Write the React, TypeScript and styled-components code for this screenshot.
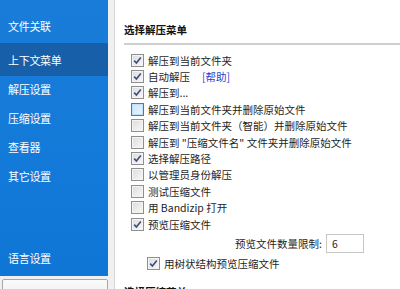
import styled, { createGlobalStyle } from 'styled-components';

const GlobalStyle = createGlobalStyle`
  html, body {
    margin: 0;
    padding: 0;
    background: #f0f0f0;
  }
  body {
    font-family: "Noto Sans CJK SC", "Noto Sans", sans-serif;
    font-size: 10.5px;
    color: #1e1e1e;
  }
`;

const navItems = ['文件关联', '上下文菜单', '解压设置', '压缩设置', '查看器', '其它设置'];

type Row = { label: string; checked?: boolean; hover?: boolean; help?: boolean };

const rows: Row[] = [
  { label: '解压到当前文件夹', checked: true },
  { label: '自动解压', checked: true, help: true },
  { label: '解压到...', checked: true },
  { label: '解压到当前文件夹并删除原始文件', hover: true },
  { label: '解压到当前文件夹（智能）并删除原始文件' },
  { label: '解压到 "压缩文件名" 文件夹并删除原始文件' },
  { label: '选择解压路径', checked: true },
  { label: '以管理员身份解压' },
  { label: '测试压缩文件' },
  { label: '用 Bandizip 打开' },
  { label: '预览压缩文件', checked: true },
];

function CheckBox({ checked, hover }: { checked?: boolean; hover?: boolean }) {
  return (
    <Box $hover={hover}>
      {checked && (
        <svg width="9" height="9" viewBox="0 0 9 9">
          <path d="M1.2 4.6 L3.4 7 L7.8 1.4" fill="none" stroke="#3d4f7c" strokeWidth="1.6" />
        </svg>
      )}
    </Box>
  );
}

export default function App() {
  return (
    <>
      <GlobalStyle />
      <Window>
        <LeftColumn>
          <Sidebar>
            {navItems.map((item, i) => (
              <NavItem key={item} $active={i === 1}>{item}</NavItem>
            ))}
            <NavItem $bottom>语言设置</NavItem>
          </Sidebar>
          <LowerButton />
        </LeftColumn>
        <Content>
          <SectionTitle>选择解压菜单</SectionTitle>
          <Divider />
          <List>
            {rows.map((r) => (
              <CheckRow key={r.label}>
                <CheckBox checked={r.checked} hover={r.hover} />
                <span>{r.label}</span>
                {r.help && <HelpLink>[帮助]</HelpLink>}
              </CheckRow>
            ))}
          </List>
          <LimitRow>
            <span>预览文件数量限制:</span>
            <NumberInput value="6" readOnly />
          </LimitRow>
          <CheckRow $indent>
            <CheckBox checked />
            <span>用树状结构预览压缩文件</span>
          </CheckRow>
          <SectionTitle $next>选择压缩菜单</SectionTitle>
        </Content>
      </Window>
    </>
  );
}

const Window = styled.div`
  display: flex;
  width: 400px;
  height: 289px;
  overflow: hidden;
  background: #f0f0f0;
`;

const LeftColumn = styled.div`
  width: 108px;
  flex-shrink: 0;
  display: flex;
  flex-direction: column;
`;

const Sidebar = styled.nav`
  height: 276px;
  flex-shrink: 0;
  background: linear-gradient(180deg, #1a7cd8 0%, #137ad9 60%, #0f76d6 100%);
  display: flex;
  flex-direction: column;
  padding-top: 11px;
  padding-bottom: 4px;
  box-sizing: border-box;
`;

const NavItem = styled.div<{ $active?: boolean; $bottom?: boolean }>`
  height: ${(p) => (p.$active ? 33 : 29)}px;
  flex-shrink: 0;
  margin-top: ${(p) => (p.$active ? 3 : 0)}px;
  margin-bottom: ${(p) => (p.$active ? -2 : 0)}px;
  display: flex;
  align-items: center;
  padding-left: 8px;
  color: #ffffff;
  font-size: 11px;
  letter-spacing: -0.3px;
  background: ${(p) => (p.$active ? '#175fa8' : 'transparent')};
  ${(p) => p.$bottom && 'margin-top: auto;'}
`;

const LowerButton = styled.div`
  margin: 3px 0 0 2px;
  height: 20px;
  flex-shrink: 0;
  border: 1px solid #a8a8a8;
  border-radius: 2px;
  background: linear-gradient(#fbfbfb, #ececec);
`;

const Content = styled.div`
  flex: 1;
  margin-left: 6px;
  border-left: 1px solid #d6d6d6;
  background: #ffffff;
  padding: 0 0 0 9px;
  display: flex;
  flex-direction: column;
  overflow: hidden;
`;

const SectionTitle = styled.div<{ $next?: boolean }>`
  font-weight: bold;
  font-size: 10.5px;
  color: #111;
  margin-top: ${(p) => (p.$next ? 12 : 22)}px;
  line-height: 16px;
  flex-shrink: 0;
`;

const Divider = styled.div`
  height: 2px;
  flex-shrink: 0;
  background: #cfcfcf;
  margin-top: 5px;
`;

const List = styled.div`
  display: flex;
  flex-direction: column;
  padding-top: 7px;
  flex-shrink: 0;
`;

const CheckRow = styled.label<{ $indent?: boolean }>`
  display: flex;
  align-items: center;
  height: 16.4px;
  flex-shrink: 0;
  gap: 4px;
  padding-left: ${(p) => (p.$indent ? 23 : 7)}px;
  white-space: nowrap;
  color: #1e1e1e;
  ${(p) => p.$indent && 'margin-top: 2px;'}
`;

const Box = styled.span<{ $hover?: boolean }>`
  width: 11px;
  height: 11px;
  flex-shrink: 0;
  display: flex;
  align-items: center;
  justify-content: center;
  border: 1px solid ${(p) => (p.$hover ? '#3c7fb1' : '#8f8f8f')};
  background: ${(p) =>
    p.$hover
      ? 'linear-gradient(135deg, #cde6fb, #e9f4fe)'
      : 'linear-gradient(135deg, #dcdcdc, #f8f8f8)'};
  box-shadow: inset 0 0 0 1px ${(p) => (p.$hover ? '#bfe0fb' : '#f4f4f4')};
`;

const HelpLink = styled.span`
  color: #1f3fd1;
  margin-left: 8px;
`;

const LimitRow = styled.div`
  display: flex;
  justify-content: flex-end;
  align-items: center;
  gap: 4px;
  height: 20px;
  flex-shrink: 0;
  margin-top: 1px;
  padding-right: 36px;
  white-space: nowrap;
`;

const NumberInput = styled.input`
  width: 31px;
  height: 17px;
  border: 1px solid #c6c6c6;
  padding: 0 0 0 5px;
  font-family: inherit;
  font-size: 10.5px;
  color: #1e1e1e;
  outline: none;
`;
